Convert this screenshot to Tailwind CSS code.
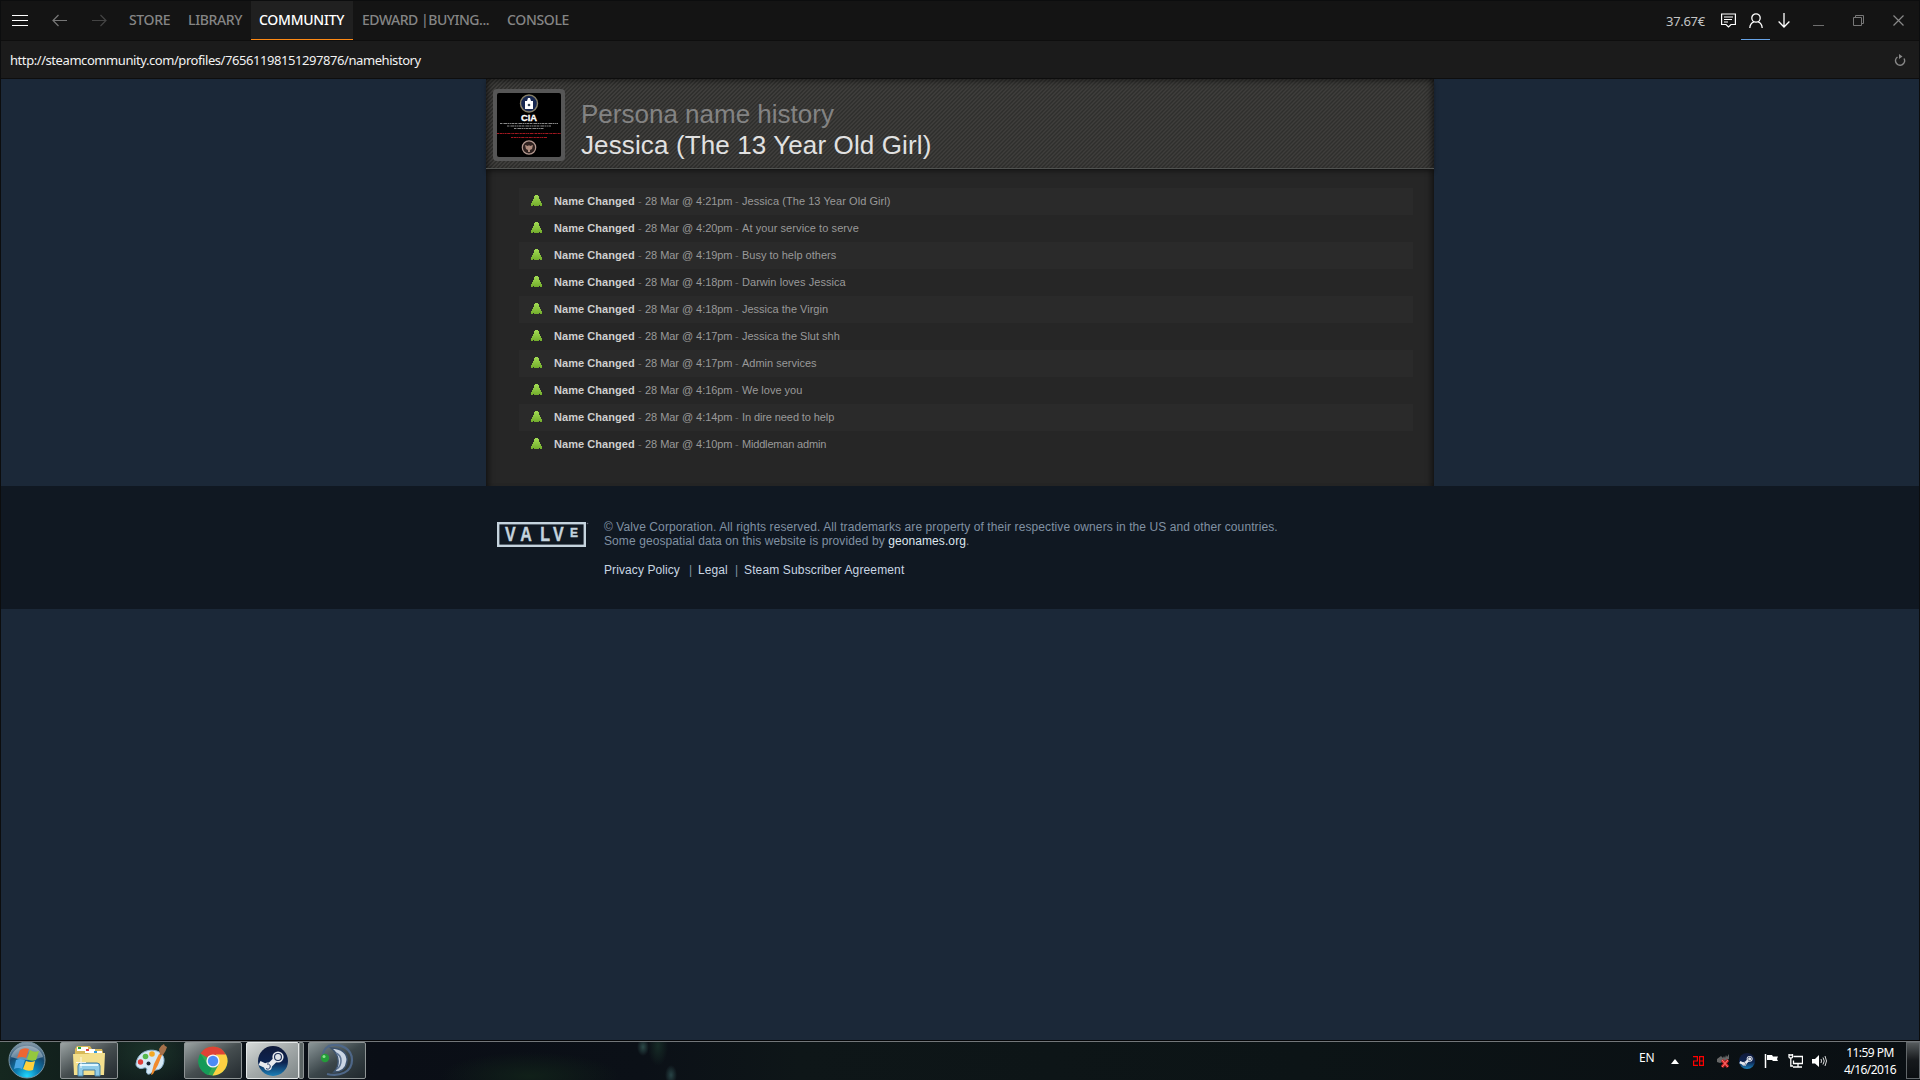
<!DOCTYPE html>
<html lang="en">
<head>
<meta charset="utf-8">
<title>Steam Community</title>
<script src="https://cdn.jsdelivr.net/npm/@tailwindcss/browser@4"></script>
</head>
<body class="w-[1920px] h-[1080px] overflow-hidden bg-[#1b2838] font-['Liberation_Sans',Arial,sans-serif]">
<svg class="absolute size-0">
  <defs>
    <linearGradient id="green" x1="0" y1="0" x2="0" y2="1"><stop offset="0" stop-color="#a3dc54"/><stop offset="1" stop-color="#73ad2c"/></linearGradient>
    <linearGradient id="steamg" x1="0" y1="0" x2="0" y2="1"><stop offset="0" stop-color="#101a3a"/><stop offset=".55" stop-color="#0c2350"/><stop offset="1" stop-color="#1c80b8"/></linearGradient>
    <symbol id="person" viewBox="0 0 11 11"><path fill="url(#green)" d="M4 0h3v1h1v3h1v2h1v2h1v3H9v-1H8v1H3v-1H2v1H0V8h1V6h1V4h1V1h1z"/></symbol>
    <symbol id="steam" viewBox="0 0 30 30"><circle cx="15" cy="15" r="15" fill="url(#steamg)"/><path d="M1.500 17l8.500 4" stroke="#e8eaee" stroke-width="4.500" fill="none"/><path d="M11 20l8-8" stroke="#e8eaee" stroke-width="5"/><circle cx="20" cy="11" r="5.600" fill="#e8eaee"/><circle cx="20" cy="11" r="4" fill="#1a2c55"/><circle cx="20" cy="11" r="2.900" fill="#dfe3e8"/><circle cx="10" cy="20.500" r="3.900" fill="#e8eaee"/><path d="M8 22.500a2.600 2.600 0 1 0 1-4.500" fill="none" stroke="#253a66" stroke-width="1"/></symbol>
  </defs>
</svg>
<div class="flex h-full flex-col">
  <!-- Client window -->
  <div class="flex h-[1040px] flex-col border-x border-t border-[#0c0d0e]">
    <header class="flex h-10 shrink-0 border-b border-[#0e0e0e] bg-[#141414] font-['Noto_Sans','Open_Sans',sans-serif] text-[14px] font-medium text-[#858585]">
      <div class="flex w-[120px] items-center">
        <svg class="ml-[10px]" width="18" height="16" viewBox="0 0 18 16" stroke="#fff"><path d="M1 2.500h16M1 7.500h16M1 12.500h16"/></svg>
        <svg class="ml-[23px]" width="15" height="14" viewBox="0 0 15 14" fill="none" stroke="#777" stroke-width="1.200"><path d="M15 6.500H1M6.500 1L1 6.500 6.500 12"/></svg>
        <svg class="ml-[25px]" width="15" height="14" viewBox="0 0 15 14" fill="none" stroke="#444" stroke-width="1.200"><path d="M0 6.500h14M8.500 1L14 6.500 8.500 12"/></svg>
      </div>
      <nav class="flex h-full leading-[38px] whitespace-nowrap">
        <a class="w-[59px] pl-2 tracking-[-0.35px]">STORE</a>
        <a class="w-[71px] pl-2 tracking-[-0.35px]">LIBRARY</a>
        <a class="w-[102px] border-b border-[#ff8a14] bg-[#202020] pl-2 tracking-[-0.25px] text-white">COMMUNITY</a>
        <a class="w-[144px] pl-[9px] tracking-[-0.48px]">EDWARD |BUYING...</a>
        <a class="w-[80px] pl-[10px] tracking-[-0.35px]">CONSOLE</a>
      </nav>
      <div class="ml-auto flex h-full items-center">
        <span class="w-[55px] text-[13px] font-normal leading-[38px] tracking-[-0.3px] text-[#c4c4c4]">37.67€</span>
        <svg width="15" height="15" viewBox="0 0 15 15" fill="none" stroke="#fff" stroke-width="1.200"><path d="M.6 1h13.800v10.500H10L7.500 14 5 11.500H.6zM3 4h9M3 6.500h8M3 9h4"/></svg>
        <div class="ml-[5px] flex h-full w-[29px] items-center justify-center border-b border-[#67a3e6]">
          <svg width="14" height="15" viewBox="0 0 14 15" fill="none" stroke="#fff" stroke-width="1.300"><circle cx="7" cy="5" r="4.200"/><path d="M.8 15c.3-4 2-5.500 4-6.200M13.200 15c-.3-4-2-5.500-4-6.200"/></svg>
        </div>
        <svg class="ml-[8px]" width="12" height="15" viewBox="0 0 12 15" fill="none" stroke="#fff" stroke-width="1.300"><path d="M6 0v14M.6 8.500L6 14l5.400-5.500"/></svg>
        <svg class="ml-[23px]" width="11" height="12" viewBox="0 0 11 12" stroke="#6e6e6e"><path d="M0 10.500h11"/></svg>
        <svg class="ml-[29px]" width="11" height="11" viewBox="0 0 11 11" fill="none" stroke="#777"><path d="M.5 2.500h8v8h-8zM2.500 2.500v-2h8v8h-2"/></svg>
        <svg class="ml-[29px] mr-[15px]" width="11" height="11" viewBox="0 0 11 11" stroke="#888" stroke-width="1.200"><path d="M.5.5l10 10M10.500.5l-10 10"/></svg>
      </div>
    </header>
    <div class="flex h-[38px] shrink-0 items-center border-b border-[#0e0e0e] bg-[#1b1b1b] pl-[9px] font-['Noto_Sans','Open_Sans',sans-serif] text-[13px] tracking-[-0.43px] text-[#f2f2f2]">
      <span class="mt-[2px]">http://steamcommunity.com/profiles/76561198151297876/namehistory</span>
      <svg class="ml-auto mr-[13px]" width="12" height="12" viewBox="0 0 12 12" fill="none" stroke="#888" stroke-width="1.500"><path d="M10 4.500A4.500 4.500 0 1 1 3.500 3"/><path d="M5 0v5L8.500 2.500z" fill="#888" stroke="none"/></svg>
    </div>

    <main class="mx-auto h-[407px] w-[948px] shrink-0 bg-[#262626] shadow-[inset_7px_0_6px_-5px_#0009,inset_-7px_0_6px_-5px_#0009]">
      <div class="flex h-[90px] border-b border-[#505250] bg-[repeating-linear-gradient(135deg,#2f2f2d_0px,#2f2f2d_0.7px,#3f3e3c_1.4px,#3f3e3c_2.12px,#2f2f2d_2.83px)] shadow-[inset_7px_0_6px_-5px_#0009,inset_-7px_0_6px_-5px_#0009,inset_0_7px_6px_-5px_#0006,0_1px_0_#151515,0_3px_4px_#0005]">
        <div class="ml-[7px] mt-[10px] size-[72px] rounded-[4px] bg-[#565656] p-1">
          <svg width="64" height="64" viewBox="0 0 64 64" font-family="Liberation Sans, Arial, sans-serif" text-anchor="middle">
            <rect width="64" height="64" rx="2" fill="#000"/>
            <circle cx="32" cy="10.500" r="8.500" fill="#17274f" stroke="#857e66" stroke-width="1.400"/><path d="M28 8h2l1-3h2l1 3h2v8h-8z" fill="#fff"/><circle cx="32" cy="12" r="1.300" fill="#345"/>
            <text x="32" y="27.500" font-size="8.500" font-weight="bold" fill="#fff" stroke="#fff" stroke-width=".3" textLength="16" lengthAdjust="spacingAndGlyphs">CIA</text>
            <path d="M3 30.500h58M10 33h44M17 35.500h30" stroke="#888" stroke-width="1" stroke-dasharray="2 .6 1 .4 3 .5"/>
            <path d="M0 40.500h64M14 44.500h36" stroke="#a31820" stroke-width="1.200" stroke-dasharray="2 .6 3 .5 1 .5"/>
            <circle cx="32" cy="54.500" r="6.700" fill="#2e211f" stroke="#b49a91" stroke-width="1.200"/><path d="M28 52l3 1 1-1 1 1 3-1-1 4-2 1v2h-2v-2l-2-1z" fill="#ad8b7c"/>
          </svg>
        </div>
        <h1 class="ml-4 mt-[20px] text-[26px] leading-[31px] whitespace-nowrap text-[#838383]">Persona name history<br><span class="tracking-[0.12px] text-[#e1e1e1]">Jessica (The 13 Year Old Girl)</span></h1>
      </div>
      <div class="mt-[19px] ml-[33px] w-[894px] text-[11px] leading-[27px] text-[#999] [&>div]:flex [&>div]:h-[27px] [&>div]:whitespace-pre [&>div:nth-child(odd)]:bg-[#2a2a2a] [&_svg]:ml-3 [&_svg]:mt-[7px] [&_svg]:mr-3 [&_svg]:size-[11px] [&_b]:text-[#cfcfcf] [&_b]:w-[81px] [&_b]:tracking-[0.06px] [&_i]:w-[10px] [&_i]:pl-[3px] [&_i]:not-italic [&_i]:text-[#666] [&_time]:w-[87px] [&_time]:tracking-[-0.05px]">
        <div><svg><use href="#person"/></svg><b>Name Changed</b><i>-</i><time>28 Mar @ 4:21pm</time><i>-</i><span class="tracking-[0.06px]">Jessica (The 13 Year Old Girl)</span></div>
        <div><svg><use href="#person"/></svg><b>Name Changed</b><i>-</i><time>28 Mar @ 4:20pm</time><i>-</i><span class="tracking-[0.08px]">At your service to serve</span></div>
        <div><svg><use href="#person"/></svg><b>Name Changed</b><i>-</i><time>28 Mar @ 4:19pm</time><i>-</i><span>Busy to help others</span></div>
        <div><svg><use href="#person"/></svg><b>Name Changed</b><i>-</i><time>28 Mar @ 4:18pm</time><i>-</i><span class="tracking-[0.05px]">Darwin loves Jessica</span></div>
        <div><svg><use href="#person"/></svg><b>Name Changed</b><i>-</i><time>28 Mar @ 4:18pm</time><i>-</i><span>Jessica the Virgin</span></div>
        <div><svg><use href="#person"/></svg><b>Name Changed</b><i>-</i><time>28 Mar @ 4:17pm</time><i>-</i><span>Jessica the Slut shh</span></div>
        <div><svg><use href="#person"/></svg><b>Name Changed</b><i>-</i><time>28 Mar @ 4:17pm</time><i>-</i><span>Admin services</span></div>
        <div><svg><use href="#person"/></svg><b>Name Changed</b><i>-</i><time>28 Mar @ 4:16pm</time><i>-</i><span>We love you</span></div>
        <div><svg><use href="#person"/></svg><b>Name Changed</b><i>-</i><time>28 Mar @ 4:14pm</time><i>-</i><span class="tracking-[-0.1px]">In dire need to help</span></div>
        <div><svg><use href="#person"/></svg><b>Name Changed</b><i>-</i><time>28 Mar @ 4:10pm</time><i>-</i><span class="tracking-[-0.18px]">Middleman admin</span></div>
      </div>
    </main>

    <footer class="flex h-[123px] shrink-0 bg-[#101822] pl-[496px] pt-[34px] text-[12px] leading-[14px] text-[#8091a2]">
      <svg class="mt-[2px] shrink-0" width="92" height="26" viewBox="0 0 92 26" font-family="Liberation Sans, Arial, sans-serif" font-weight="bold" fill="#c5d3de">
        <rect x="1.200" y="1.200" width="86.600" height="22.600" fill="none" stroke="#c5d3de" stroke-width="2.400"/>
        <g stroke="#c5d3de" stroke-width=".4"><text y="19.500" font-size="20" transform="scale(.8 1)" x="10 29 54 70">VALV</text><text x="73" y="15" font-size="13" textLength="8" lengthAdjust="spacingAndGlyphs">E</text></g>
        <circle cx="90.500" cy="1.500" r=".8" fill="#667"/>
      </svg>
      <div class="ml-[15px] whitespace-nowrap tracking-[0.09px]">
        <p>© Valve Corporation. All rights reserved. All trademarks are property of their respective owners in the US and other countries.</p>
        <p>Some geospatial data on this website is provided by <a class="text-[#dce6ee]">geonames.org</a>.</p>
        <p class="mt-[15px] flex text-[#c9d6e2]"><a class="w-[85px]">Privacy Policy</a><span class="w-[9px] text-[#8091a2]">|</span><a class="w-[37px]">Legal</a><span class="w-[9px] text-[#8091a2]">|</span><a class="tracking-[0.14px]">Steam Subscriber Agreement</a></p>
      </div>
    </footer>
  </div>

  <!-- Taskbar -->
  <div class="flex h-10 items-start border-t border-[#050608] bg-[radial-gradient(ellipse_60px_40px_at_150px_10px,#1c342a,transparent),radial-gradient(ellipse_90px_24px_at_530px_35px,#102019,transparent),radial-gradient(ellipse_6px_9px_at_643px_6px,#2c4a49,transparent),radial-gradient(ellipse_6px_10px_at_671px_34px,#284446,transparent),radial-gradient(ellipse_10px_20px_at_658px_5px,#162b26,transparent),linear-gradient(90deg,#15271f_0px,#0c1318_190px,#0a0e16_380px,#0b1017_640px,#0e1618_800px,#0c1416_1300px,#0a0f13_1920px)]">
    <div class="flex h-[39px] w-full border-t border-[#73777a] font-['Noto_Sans','Open_Sans',sans-serif] text-white">
      <svg class="ml-2 shrink-0" width="38" height="37" viewBox="0 0 38 37">
        <defs><radialGradient id="orb" cx=".5" cy=".95" r=".9"><stop offset="0" stop-color="#20d8ff"/><stop offset=".35" stop-color="#0d7fb4"/><stop offset=".7" stop-color="#15486f"/><stop offset="1" stop-color="#8095a5"/></radialGradient></defs>
        <circle cx="19" cy="18" r="18" fill="url(#orb)" stroke="#7894a5"/><path d="M3 15a16.500 15 0 0 1 32 0q-16 6-32 0z" fill="#fff" opacity=".35"/>
        <path d="M12 8q4-3 9-1l-3 9q-4-2-9 0z" fill="#ed6633"/><path d="M22 8q4 3 9 1l-3 9q-5 2-9-1z" fill="#94c83e"/><path d="M8 18q4-2 9 0l-3 9q-4-2-8 0z" fill="#49a6e3"/><path d="M18 19q5 2 9 0l-2 9q-5 2-10-1z" fill="#ffd13c"/>
      </svg>
      <div class="ml-[14px] flex h-[37px] w-[58px] shrink-0 items-center justify-center rounded-[2px] border border-[#8e9495] bg-linear-to-br from-[#9ca4a4] via-[#464e50] to-[#242b30]">
        <svg width="34" height="32" viewBox="0 0 34 32"><path d="M3 4l2-3h13l2 3h10l1 3v23H2z" fill="#d8b858"/><path d="M5 2h11v4H5z" fill="#fff"/><path d="M6 2h3v2H6z" fill="#25a53a"/><path d="M13 4h10v4H13z" fill="#fff"/><path d="M14 4h3v2h-3z" fill="#d44"/><path d="M21 6h9v4h-9z" fill="#fff"/><path d="M22 6h3v2h-3z" fill="#39d"/><path d="M1 9h15l2-1h15l-1 22H2z" fill="#f3df8d"/><path d="M6 31V21q0-3 3-3h16q3 0 3 3v10h-5v-6H11v6z" fill="#8fcbe8" stroke="#437fa4"/><path d="M8 20h18" stroke="#dff6ff" stroke-width="2"/><path d="M9 12v11M4 17.500h10" stroke="#fff" opacity=".8"/></svg>
      </div>
      <svg class="ml-[16px] mt-[2px] shrink-0" width="34" height="34" viewBox="0 0 34 34"><path d="M2 20C3 9 14 4 23 7c8 3 9 11 4 17-3 3-7 1-9 4-3 4-7 2-5-3-2-3-5 1-8-1-2-1-3-2-3-4z" fill="#d5e8f5" stroke="#8fb4d0"/><circle cx="6.500" cy="18" r="2.700" fill="#e03d38"/><circle cx="11.500" cy="12.500" r="2.800" fill="#55b94d"/><circle cx="18" cy="10" r="2.800" fill="#f3a824"/><circle cx="14.500" cy="19.500" r="2" fill="#172333"/><path d="M25 10l-5 10-3 11 2-1 5-9 4-10z" fill="#f18a2d"/><path d="M26 11l-1-6q2-4 5-5 0 2 3 3-1 4-4 8z" fill="#a5714a"/></svg>
      <div class="ml-[16px] flex h-[37px] w-[58px] shrink-0 items-center justify-center rounded-[2px] border border-[#8e9495] bg-linear-to-br from-[#9ca4a4] via-[#464e50] to-[#242b30]">
        <svg width="30" height="30" viewBox="0 0 30 30"><circle cx="15" cy="15" r="14.500" fill="#34a853"/><path d="M15 15L2.500 7.500a14.500 14.500 0 0 1 25.600 1.500H15z" fill="#df4336"/><path d="M28 8.500a14.500 14.500 0 0 1-13.500 21L21 18l-3-9.500z" fill="#fdd042"/><path d="M2.500 7.500L9 18l5 4-4 7A14.500 14.500 0 0 1 2.500 7.500z" fill="#169a58"/><circle cx="15" cy="15" r="6.600" fill="#f5f5f5"/><circle cx="15" cy="15" r="5.200" fill="#4c8bf5"/></svg>
      </div>
      <div class="ml-[4px] flex h-[37px] w-[53px] shrink-0 items-center justify-center rounded-[2px] border border-[#e5e8e8] bg-linear-to-br from-[#d6dad9] via-[#a3a9a9] to-[#7f8788]"><svg width="30" height="30"><use href="#steam"/></svg></div>
      <div class="h-[37px] w-[5px] shrink-0 rounded-r-[2px] border border-[#8e9495] bg-[#5b6464]"></div>
      <div class="ml-[4px] flex h-[37px] w-[58px] shrink-0 items-center justify-center rounded-[2px] border border-[#8e9495] bg-linear-to-br from-[#8b9698] via-[#3b464a] to-[#20282d]">
        <svg width="34" height="33" viewBox="0 0 34 33" fill="none"><path d="M8 2c14-4 24 4 24 14 0 12-12 17-25 14" stroke="#4e6788" stroke-width="2.200"/><path d="M11 4c11 0 17 6 16 13-1 8-6 11-13 11 5-5 7-16-3-24z" fill="#cbd6e4" stroke="#3d536e" stroke-width="1.500"/><path d="M16 9c7 3 6 12 1 16" stroke="#5d7493" stroke-width="1.500"/><path d="M3 10q2-8 8-8" stroke="#4e6788" stroke-width="2"/><circle cx="5" cy="14" r="4.200" fill="#249b39"/><circle cx="4" cy="12.500" r="1.500" fill="#86e38a"/></svg>
      </div>
      <div class="ml-auto flex h-[37px] items-center">
        <span class="mb-[6px] w-[32px] text-[12px] leading-[20px] tracking-[-0.2px]">EN</span>
        <svg class="mt-[2px]" width="8" height="5" viewBox="0 0 8 5"><path d="M4 0l4 5H0z" fill="#fff"/></svg>
        <svg class="ml-[14px]" width="11" height="10" viewBox="0 0 11 10" fill="none" stroke="#f00" stroke-width="1.200"><path d="M0 .6h4.400V5H.6v4.400H5M6.600.6h3.800v8.800H6.600zM6.600 5h3.800"/></svg>
        <svg class="ml-[12px]" width="15" height="16" viewBox="0 0 15 16"><path d="M1 6l4-3 2 2 1-2 1 2 1-3 1 2 2-3v5l-9 4-3-1z" fill="#666"/><path d="M6 7l6 7M12 7l-6 7" stroke="#c22" stroke-width="3"/><path d="M6 7l6 7M12 7l-6 7" stroke="#f77"/></svg>
        <svg class="ml-[8px]" width="16" height="16"><use href="#steam"/></svg>
        <svg class="ml-[9px]" width="15" height="15" viewBox="0 0 15 15"><path d="M1.500 1v14" stroke="#fff" stroke-width="1.500"/><path d="M3 2h5l1 1.500h5L13 6l1 2H9L8 7H3z" fill="#fff"/></svg>
        <svg class="ml-[9px]" width="15" height="15" viewBox="0 0 15 15" fill="none" stroke="#fff" stroke-width="1.300"><path d="M5.500 3.500h9v7h-9v-3M5 14h9M10 11v3M1 1v3q0 1 1.500 1H3q1.500 0 1.500-1V1M.5 2h4M2.800 5v8H5"/></svg>
        <svg class="ml-[9px]" width="15" height="14" viewBox="0 0 15 14"><path d="M0 5h3l4-4v12L3 9.500H0z" fill="#fff"/><path d="M9 5q1 2 0 4M11 3.500q2.500 3.500 0 7M13 2q3 5 0 10" fill="none" stroke="#ddd"/></svg>
        <div class="ml-[8px] mr-[1px] w-[70px] text-center text-[12px] leading-[17px] tracking-[-0.55px] whitespace-nowrap">11:59 PM<br>4/16/2016</div>
      </div>
      <div class="h-[37px] w-[14px] shrink-0 border border-[#62676a] bg-linear-to-b from-[#555a5c] via-[#16191c] to-[#0b0e11]"></div>
    </div>
  </div>
</div>
</body>
</html>
